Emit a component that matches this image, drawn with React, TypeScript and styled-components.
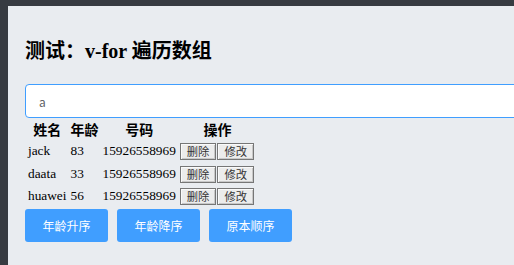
import styled, { createGlobalStyle } from "styled-components";

const GlobalStyle = createGlobalStyle`
  html, body {
    margin: 0;
    padding: 0;
    overflow: hidden;
  }
`;

const people = [
  { name: "jack", age: 83, phone: "15926558969" },
  { name: "daata", age: 33, phone: "15926558969" },
  { name: "huawei", age: 56, phone: "15926558969" },
];

const App = () => {
  return (
    <>
      <GlobalStyle />
      <Frame>
        <Main>
          <Title>测试：v-for 遍历数组</Title>
          <SearchInput defaultValue="a" />
          <Table>
            <thead>
              <tr>
                <Th>姓名</Th>
                <Th>年龄</Th>
                <Th>号码</Th>
                <Th>操作</Th>
              </tr>
            </thead>
            <tbody>
              {people.map((p) => (
                <tr key={p.name}>
                  <Td>{p.name}</Td>
                  <Td>{p.age}</Td>
                  <Td>{p.phone}</Td>
                  <Td>
                    <SmallButton>删除</SmallButton>
                    <SmallButton>修改</SmallButton>
                  </Td>
                </tr>
              ))}
            </tbody>
          </Table>
          <ButtonRow>
            <SortButton>年龄升序</SortButton>
            <SortButton>年龄降序</SortButton>
            <SortButton>原本顺序</SortButton>
          </ButtonRow>
        </Main>
      </Frame>
    </>
  );
};

const Frame = styled.div`
  background: #373b41;
  padding: 6px 0 0 8px;
  height: 265px;
  box-sizing: border-box;
`;

const Main = styled.div`
  background: #e9ecf0;
  height: 100%;
  padding: 31px 0 0 17px;
  box-sizing: border-box;
  overflow: hidden;
`;

const Title = styled.h2`
  margin: 0 0 19px;
  font-family: "Liberation Serif", "Noto Sans CJK SC", serif;
  font-size: 20px;
  line-height: 28px;
  font-weight: bold;
  color: #000;
`;

const SearchInput = styled.input`
  display: block;
  width: 600px;
  height: 34px;
  box-sizing: border-box;
  border: 1px solid #409eff;
  border-radius: 4px;
  background: #fff;
  padding: 0 13px;
  font-family: "Noto Sans CJK SC", "Noto Sans", sans-serif;
  font-size: 12px;
  color: #606266;
  outline: none;
`;

const Table = styled.table`
  border-spacing: 2px;
  margin: 0;
  font-family: "Liberation Serif", "Noto Sans CJK SC", serif;
  font-size: 13.33px;
  color: #000;
`;

const Th = styled.th`
  padding: 1px;
  font-size: 14px;
  font-weight: bold;
  font-family: "Noto Sans CJK SC", sans-serif;
  line-height: 17px;
  text-align: center;
`;

const Td = styled.td`
  padding: 1px;
  height: 18px;
  line-height: 18px;
  white-space: nowrap;
  text-align: left;
`;

const SmallButton = styled.button`
  height: 17px;
  padding: 0 6px;
  margin: 0 1px 0 0;
  vertical-align: middle;
  background: #ececec;
  border: 1px solid #767676;
  box-shadow: inset 1px 1px 0 #fafafa, inset -1px -1px 0 #c8c8c8;
  border-radius: 0;
  font-family: "Noto Sans CJK SC", sans-serif;
  font-size: 11.3px;
  line-height: 13px;
  color: #333;
`;

const ButtonRow = styled.div`
  display: flex;
  gap: 9px;
  margin-top: 1px;
`;

const SortButton = styled.button`
  width: 83px;
  height: 33px;
  border: none;
  border-radius: 3px;
  background: #409eff;
  color: #fff;
  font-family: "Noto Sans CJK SC", sans-serif;
  font-size: 12px;
  padding: 0;
`;

export default App;
